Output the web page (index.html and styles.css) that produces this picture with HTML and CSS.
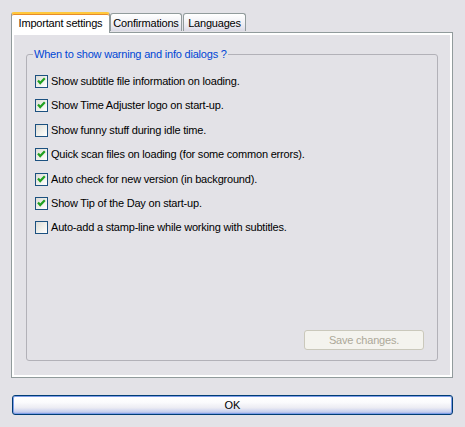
FILE: index.html
```html
<!DOCTYPE html>
<html>
<head>
<meta charset="utf-8">
<link rel="stylesheet" href="styles.css">
</head>
<body>
<div class="window">
  <div class="tabs">
    <div class="tab active">Important settings</div>
    <div class="tab t-conf">Confirmations</div>
    <div class="tab t-lang">Languages</div>
  </div>
  <div class="panel">
    <fieldset class="group">
      <legend>When to show warning and info dialogs ?</legend>
      <div class="options">
        <label class="opt"><span class="cb on"><svg viewBox="0 0 13 13" width="13" height="13"><path d="M3 5.5 L5.2 8 L9.8 3.2" /></svg></span>Show subtitle file information on loading.</label>
        <label class="opt"><span class="cb on"><svg viewBox="0 0 13 13" width="13" height="13"><path d="M3 5.5 L5.2 8 L9.8 3.2" /></svg></span>Show Time Adjuster logo on start-up.</label>
        <label class="opt"><span class="cb"></span>Show funny stuff during idle time.</label>
        <label class="opt"><span class="cb on"><svg viewBox="0 0 13 13" width="13" height="13"><path d="M3 5.5 L5.2 8 L9.8 3.2" /></svg></span>Quick scan files on loading (for some common errors).</label>
        <label class="opt"><span class="cb on"><svg viewBox="0 0 13 13" width="13" height="13"><path d="M3 5.5 L5.2 8 L9.8 3.2" /></svg></span>Auto check for new version (in background).</label>
        <label class="opt"><span class="cb on"><svg viewBox="0 0 13 13" width="13" height="13"><path d="M3 5.5 L5.2 8 L9.8 3.2" /></svg></span>Show Tip of the Day on start-up.</label>
        <label class="opt"><span class="cb"></span>Auto-add a stamp-line while working with subtitles.</label>
      </div>
      <button class="save" disabled>Save changes.</button>
    </fieldset>
  </div>
  <button class="ok">OK</button>
</div>
</body>
</html>
```
FILE: styles.css
```css
html, body {
  margin: 0;
  padding: 0;
}
body {
  background: #e3e2e7;
  font-family: "Liberation Sans", Arial, sans-serif;
  font-size: 11px;
  letter-spacing: -0.2px;
  color: #000;
  width: 465px;
  height: 427px;
  overflow: hidden;
}
.window {
  padding: 12px 12px 0 11px;
  display: flex;
  flex-direction: column;
}
.tabs {
  display: flex;
  align-items: flex-end;
  height: 20px;
  position: relative;
  z-index: 1;
}
.tab {
  box-sizing: border-box;
  height: 18px;
  margin-bottom: 1px;
  border: 1px solid #919b9c;
  border-bottom: none;
  border-radius: 3px 3px 0 0;
  background: linear-gradient(#ffffff 0%, #f3f3f7 45%, #e6e5ee 80%, #d9d8e3 100%);
  display: flex;
  align-items: center;
  justify-content: center;
  white-space: nowrap;
  padding-top: 1px;
}
.tab.active {
  width: 99px;
  height: 21px;
  margin-bottom: -1px;
  background: #ffffff;
  border-top: 2px solid #ffc83c;
  box-shadow: inset 0 1px 0 #e68b2c;
  border-radius: 3px 3px 0 0;
  padding-top: 0;
  padding-bottom: 2px;
}
.t-conf {
  width: 72px;
}
.t-lang {
  width: 63px;
  margin-left: 1px;
}
.panel {
  box-sizing: border-box;
  width: 442px;
  height: 346px;
  border: 1px solid #919b9c;
  box-shadow: inset 2px 2px 0 #ffffff, inset -2px -2px 0 #ffffff;
  padding: 14px 14px 16px 14px;
  display: flex;
}
.group {
  box-sizing: border-box;
  flex: 1;
  margin: 0;
  border: 1px solid #b2b1b8;
  border-radius: 3px;
  padding: 0 13px 10px 8px;
  display: flex;
  flex-direction: column;
  min-width: 0;
}
.group legend {
  color: #0046d5;
  padding: 0 1px;
  margin-left: -2px;
  line-height: 14px;
}
.options {
  display: grid;
  grid-auto-rows: 24.4px;
  padding-top: 14px;
}
.opt {
  display: flex;
  align-items: flex-start;
  gap: 3px;
  line-height: 13px;
  white-space: nowrap;
}
.cb {
  box-sizing: border-box;
  width: 13px;
  height: 13px;
  flex: none;
  border: 1px solid #1c5180;
  background: linear-gradient(135deg, #dcdcd7 0%, #f2f2ee 60%, #ffffff 100%);
  position: relative;
}
.cb svg {
  position: absolute;
  left: -1px;
  top: -1px;
  fill: none;
  stroke: #21a121;
  stroke-width: 2.2;
}
.save {
  margin-top: auto;
  align-self: flex-end;
  width: 120px;
  height: 20px;
  box-sizing: border-box;
  border: 1px solid #cac8bb;
  border-radius: 3px;
  background: #f4f3ee;
  color: #aca899;
  font-family: "Liberation Sans", Arial, sans-serif;
  font-size: 11px;
  letter-spacing: -0.2px;
  padding: 0;
}
.ok {
  margin-top: 17px;
  margin-left: 1px;
  width: 441px;
  height: 20px;
  box-sizing: border-box;
  border: 1px solid #003c74;
  border-radius: 3px;
  background: linear-gradient(#ffffff 0%, #fbfbfd 35%, #ececf3 65%, #c8cfee 88%, #93a6e0 100%);
  box-shadow: inset 0 0 0 1px #7f9ee8;
  font-family: "Liberation Sans", Arial, sans-serif;
  font-size: 11px;
  color: #000;
  padding: 0;
}
```
